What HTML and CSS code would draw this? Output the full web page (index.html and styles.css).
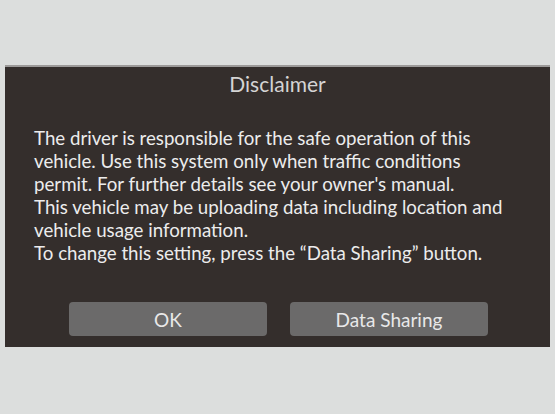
FILE: index.html
```html
<!DOCTYPE html>
<html>
<head>
<meta charset="utf-8">
<link rel="stylesheet" href="styles.css">
</head>
<body>
<div class="dialog">
  <div class="title">Disclaimer</div>
  <div class="message">
    <p>The driver is responsible for the safe operation of this vehicle. Use this system only when traffic conditions permit. For further details see your owner's manual.</p>
    <p>This vehicle may be uploading data including location and vehicle usage information.</p>
    <p>To change this setting, press the “Data Sharing” button.</p>
  </div>
  <div class="actions">
    <button class="btn">OK</button>
    <button class="btn">Data Sharing</button>
  </div>
</div>
</body>
</html>
```
FILE: styles.css
```css
html, body {
  margin: 0;
  padding: 0;
  background: #dcdedd;
  width: 555px;
  height: 414px;
  overflow: hidden;
}
body {
  padding: 65px 5px 0 5px;
  box-sizing: border-box;
  font-family: Lato, "Open Sans", sans-serif;
}
.dialog {
  background: #342e2c;
  border-top: 2px solid #9c9a99;
  height: 282px;
  box-sizing: border-box;
  display: flex;
  flex-direction: column;
}
.title {
  text-align: center;
  color: #d4d4d4;
  font-size: 21px;
  line-height: 28px;
  margin-top: 3px;
}
.message {
  color: #ececec;
  font-size: 18.7px;
  line-height: 23px;
  width: 480px;
  padding: 0 0 0 29px;
  margin-top: 29px;
}
.message p {
  margin: 0;
}
.actions {
  display: flex;
  gap: 23px;
  padding-left: 64px;
  margin-top: 37px;
}
.btn {
  width: 198px;
  height: 34px;
  background: #6b6a6a;
  border: none;
  border-radius: 4px;
  color: #e8e8e8;
  font-family: Lato, "Open Sans", sans-serif;
  font-size: 19px;
  padding: 0;
}
```
